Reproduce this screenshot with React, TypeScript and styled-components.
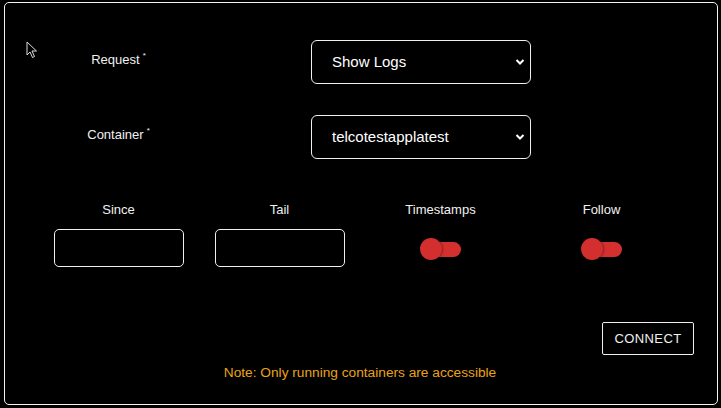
import React from "react";
import styled, { createGlobalStyle } from "styled-components";

const Global = createGlobalStyle`
  html, body { margin: 0; padding: 0; background: #000; }
  body { font-family: "Liberation Sans", Arial, sans-serif; color: #fff; }
  * { box-sizing: border-box; }
`;

const Page = styled.div`
  width: 721px;
  height: 408px;
  padding: 2px 3px 3px 4px;
  background: #000;
  position: relative;
`;

const Frame = styled.div`
  width: 714px;
  height: 403px;
  border: 1px solid #f2f2f2;
  border-radius: 5px;
  padding: 37px 35px 0 33px;
  display: flex;
  flex-direction: column;
`;

const FieldRow = styled.div<{ $mt?: number }>`
  display: flex;
  align-items: center;
  margin-top: ${(p) => p.$mt ?? 0}px;
  height: 43px;
`;

const LabelCell = styled.div`
  width: 161px;
  display: flex;
  justify-content: center;
  align-items: flex-start;
  padding-bottom: 5px;
  font-size: 13px;
  color: #f0f0f0;
`;

const Star = styled.sup`
  font-size: 8px;
  margin-left: 3px;
  position: relative;
  top: -1px;
`;

const SelectBox = styled.div`
  margin-left: 112px;
  width: 220px;
  height: 44px;
  border: 1px solid #f0f0f0;
  border-radius: 6px;
  display: flex;
  align-items: center;
  justify-content: space-between;
  padding: 0 5px 0 20px;
  font-size: 15px;
  color: #fff;
`;

const Grid4 = styled.div`
  display: grid;
  grid-template-columns: repeat(4, 161px);
  margin-top: 44px;
`;

const Col = styled.div`
  display: flex;
  flex-direction: column;
  align-items: center;
`;

const ColLabel = styled.div`
  font-size: 13px;
  color: #f0f0f0;
  height: 15px;
  line-height: 15px;
`;

const TextBox = styled.div`
  margin-top: 12px;
  width: 130px;
  height: 38px;
  border: 1px solid #f0f0f0;
  border-radius: 5px;
`;

const SwitchWrap = styled.div`
  margin-top: 21px;
  width: 40px;
  height: 22px;
  position: relative;
`;

const Track = styled.div`
  position: absolute;
  left: 2px;
  top: 4px;
  width: 38px;
  height: 15px;
  border-radius: 8px;
  background: #d3302f;
`;

const Knob = styled.div`
  position: absolute;
  left: -1px;
  top: 0;
  width: 22px;
  height: 22px;
  border-radius: 50%;
  background: #d32f2f;
  box-shadow: 1px 0 2px rgba(0, 0, 0, 0.35);
`;

const ButtonRow = styled.div`
  display: flex;
  justify-content: flex-end;
  margin-top: 55px;
  margin-right: -12px;
`;

const ConnectButton = styled.div`
  width: 92px;
  height: 33px;
  border: 1px solid #f0f0f0;
  border-radius: 2px;
  display: flex;
  align-items: center;
  justify-content: center;
  font-size: 13px;
  letter-spacing: 0.4px;
  color: #f0f0f0;
`;

const Note = styled.div`
  text-align: center;
  margin-top: 10px;
  font-size: 13.7px;
  color: #eaa318;
`;

const Cursor = styled.svg`
  position: absolute;
  left: 26px;
  top: 41px;
`;

const Chevron = () => (
  <svg width="10" height="8" viewBox="0 0 10 8">
    <path d="M1.5 2 L5 5.5 L8.5 2" stroke="#fff" strokeWidth="2" fill="none" />
  </svg>
);

const Switch = () => (
  <SwitchWrap>
    <Track />
    <Knob />
  </SwitchWrap>
);

export default function App() {
  return (
    <>
      <Global />
      <Page>
        <Frame>
          <FieldRow>
            <LabelCell>
              Request<Star>*</Star>
            </LabelCell>
            <SelectBox>
              <span>Show Logs</span>
              <Chevron />
            </SelectBox>
          </FieldRow>
          <FieldRow $mt={32}>
            <LabelCell>
              Container<Star>*</Star>
            </LabelCell>
            <SelectBox>
              <span>telcotestapplatest</span>
              <Chevron />
            </SelectBox>
          </FieldRow>
          <Grid4>
            <Col>
              <ColLabel>Since</ColLabel>
              <TextBox />
            </Col>
            <Col>
              <ColLabel>Tail</ColLabel>
              <TextBox />
            </Col>
            <Col>
              <ColLabel>Timestamps</ColLabel>
              <Switch />
            </Col>
            <Col>
              <ColLabel>Follow</ColLabel>
              <Switch />
            </Col>
          </Grid4>
          <ButtonRow>
            <ConnectButton>CONNECT</ConnectButton>
          </ButtonRow>
          <Note>Note: Only running containers are accessible</Note>
        </Frame>
        <Cursor width="12" height="18" viewBox="0 0 12 18">
          <path d="M1 1 L1 14 L4 11 L6.5 16.5 L8.5 15.5 L6 10 L10.5 10 Z" fill="#000" stroke="#ddd" strokeWidth="1" />
        </Cursor>
      </Page>
    </>
  );
}
